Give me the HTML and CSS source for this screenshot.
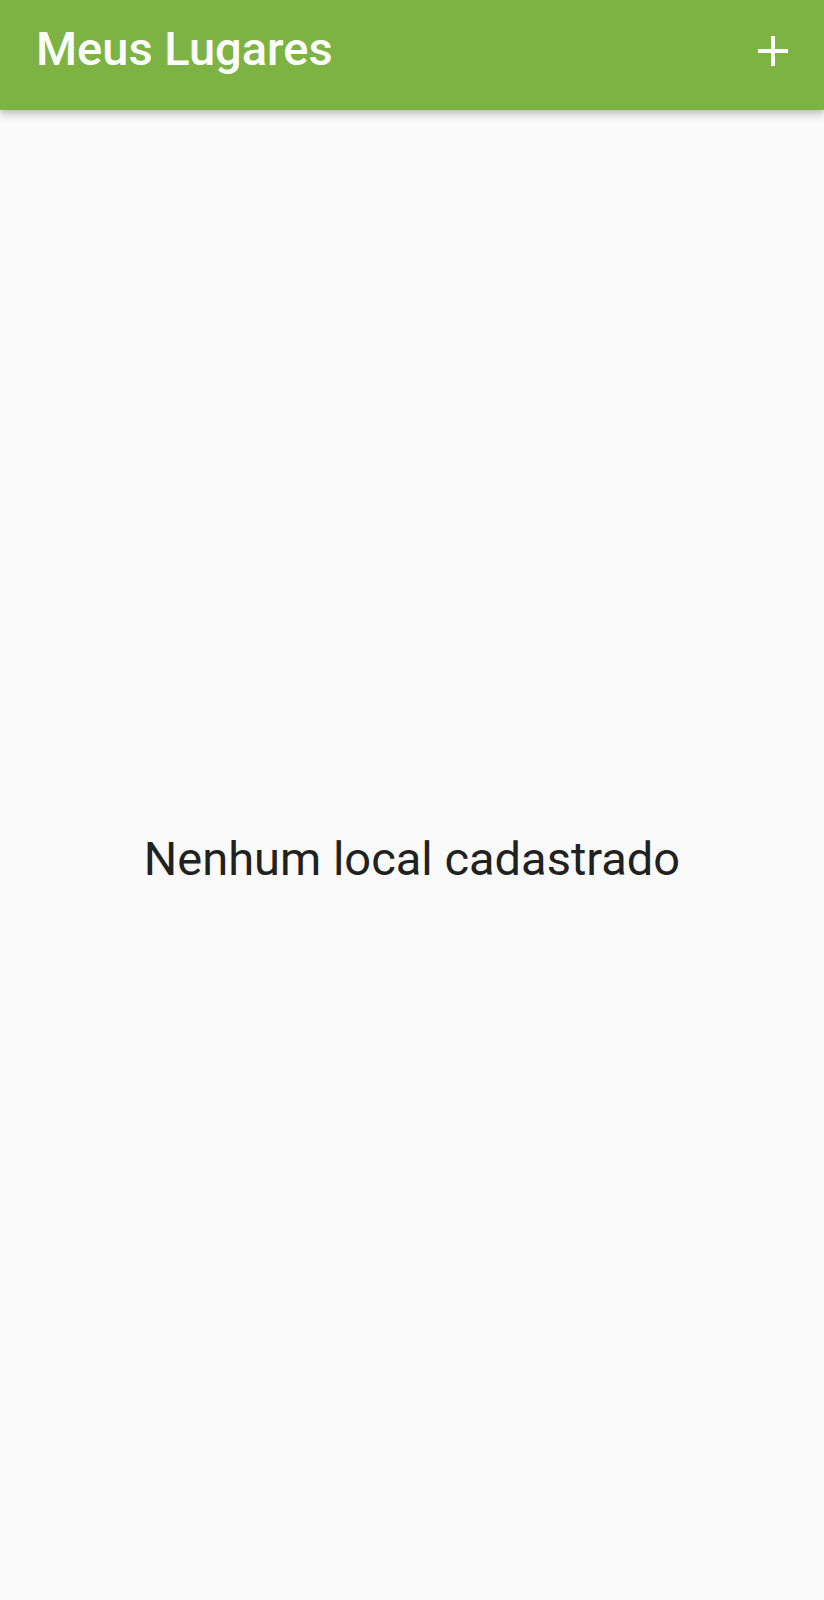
FILE: index.html
```html
<!DOCTYPE html>
<html lang="pt">
<head>
<meta charset="utf-8">
<title>Meus Lugares</title>
<link rel="stylesheet" href="styles.css">
</head>
<body>
<div class="app">
  <header class="appbar">
    <h1 class="title">Meus Lugares</h1>
    <button class="action" aria-label="Adicionar">
      <svg width="32" height="32" viewBox="0 0 32 32"><path d="M16 1v30M1 16h30" stroke="#fff" stroke-width="4" fill="none"/></svg>
    </button>
  </header>
  <main class="content">
    <p class="empty">Nenhum local cadastrado</p>
  </main>
</div>
</body>
</html>
```
FILE: styles.css
```css
html, body {
  margin: 0;
  padding: 0;
  height: 100%;
}
body {
  background: #fafafa;
  font-family: Roboto, "Noto Sans", sans-serif;
}
.app {
  display: flex;
  flex-direction: column;
  height: 1600px;
}
.appbar {
  height: 110px;
  flex: none;
  background: #7cb342;
  display: flex;
  align-items: center;
  justify-content: space-between;
  padding: 0 36px 0 36px;
  box-shadow: 0 4px 8px rgba(0,0,0,0.25);
  position: relative;
  z-index: 1;
  box-sizing: border-box;
}
.title {
  margin: 0;
  color: #fff;
  font-size: 47px;
  font-weight: 500;
  line-height: 1;
  padding-bottom: 14px;
}
.action {
  background: none;
  border: 0;
  padding: 0;
  margin-right: -1px;
  display: flex;
  margin-bottom: 8px;
}
.content {
  flex: 1;
  display: flex;
  align-items: center;
  justify-content: center;
  padding-top: 6px;
}
.empty {
  margin: 0;
  color: #212121;
  font-size: 47px;
  line-height: 1;
}
```
